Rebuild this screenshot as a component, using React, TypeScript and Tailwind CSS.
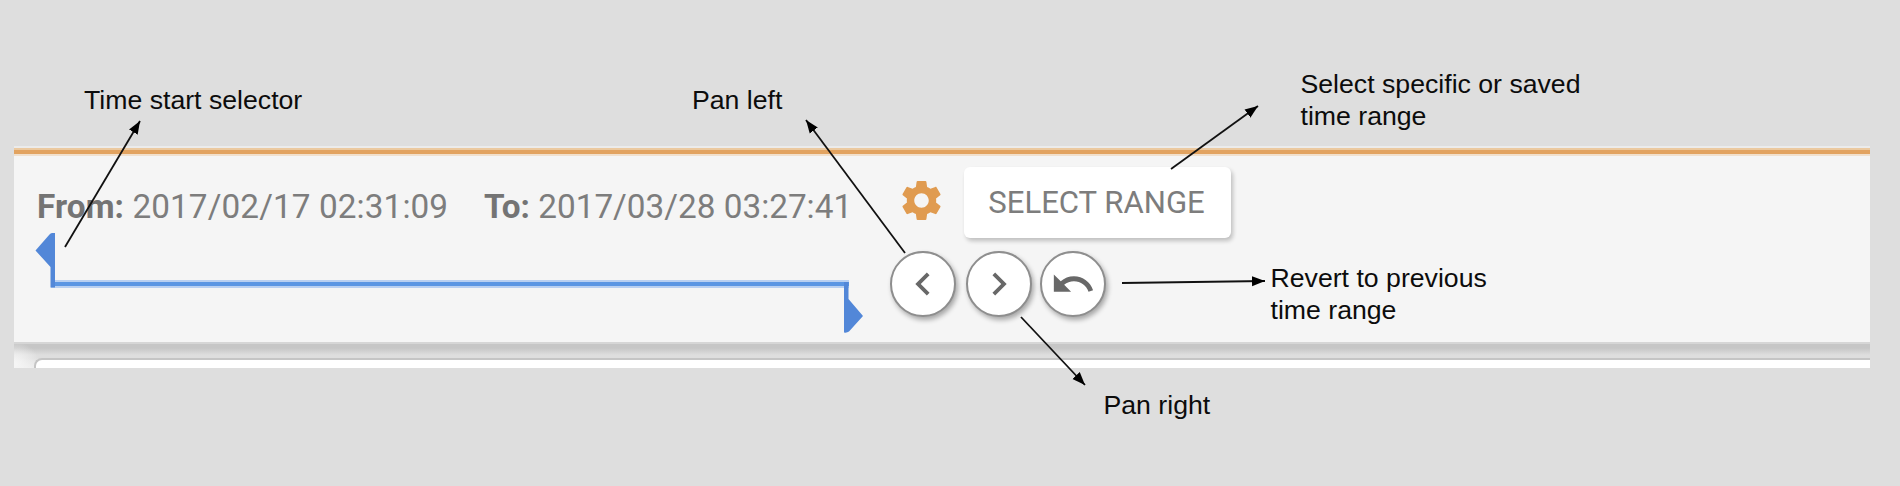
import React from "react";

const SETTINGS =
  "M19.43 12.98c.04-.32.07-.64.07-.98s-.03-.66-.07-.98l2.11-1.65c.19-.15.24-.42.12-.64l-2-3.46c-.12-.22-.39-.3-.61-.22l-2.49 1c-.52-.4-1.08-.73-1.69-.98l-.38-2.65C14.46 2.18 14.25 2 14 2h-4c-.25 0-.46.18-.49.42l-.38 2.65c-.61.25-1.17.59-1.69.98l-2.49-1c-.23-.09-.49 0-.61.22l-2 3.46c-.13.22-.07.49.12.64l2.11 1.65c-.04.32-.07.65-.07.98s.03.66.07.98l-2.11 1.65c-.19.15-.24.42-.12.64l2 3.46c.12.22.39.3.61.22l2.49-1c.52.4 1.08.73 1.69.98l.38 2.65c.03.24.24.42.49.42h4c.25 0 .46-.18.49-.42l.38-2.65c.61-.25 1.17-.59 1.69-.98l2.49 1c.23.09.49 0 .61-.22l2-3.46c.12-.22.07-.49-.12-.64l-2.11-1.65zM12 15.7c-2.04 0-3.7-1.66-3.7-3.7s1.66-3.7 3.7-3.7 3.7 1.66 3.7 3.7-1.66 3.7-3.7 3.7z";
const CHEVRON_LEFT = "M15.41 7.41L14 6l-6 6 6 6 1.41-1.41L10.83 12z";
const CHEVRON_RIGHT = "M10 6L8.59 7.41 13.17 12l-4.58 4.59L10 18l6-6z";
const UNDO =
  "M12.5 8c-2.65 0-5.05.99-6.9 2.6L2 7v9h9l-3.62-3.62c1.39-1.16 3.16-1.88 5.12-1.88 3.54 0 6.55 2.31 7.6 5.5l2.37-.78C21.08 11.03 17.15 8 12.5 8z";

function Icon({ d, className }: { d: string; className: string }) {
  return (
    <svg viewBox="0 0 24 24" fill="currentColor" className={className}>
      <path d={d} />
    </svg>
  );
}

function RoundButton({ d, label }: { d: string; label: string }) {
  return (
    <button
      aria-label={label}
      className="flex size-[66px] items-center justify-center rounded-full border-2 border-[#8e8e8e] bg-white text-[#686868] shadow-[2px_3px_5px_rgba(0,0,0,0.32)]"
    >
      <Icon d={d} className="size-[46px] shrink-0" />
    </button>
  );
}

function DateField({ name, value, className }: { name: string; value: string; className: string }) {
  return (
    <div className={className}>
      <span className="font-bold text-[#747474]">{name}</span> {value}
    </div>
  );
}

function RangeSlider() {
  return (
    <svg width="830" height="104" viewBox="0 0 830 104" className="mt-1 block">
      <rect x="17" y="50" width="798" height="8" fill="#b9d0f1" />
      <rect x="17" y="52" width="798" height="4" fill="#5b96e3" />
      <path d="M18 3H21V57.5H16.5V37L1.500 20.500L15.500 4.500Q16.500 3 18 3Z" fill="#5287d8" />
      <path d="M810 52H814.5V69L829 86L815 101.5Q813 103 810 102.500Z" fill="#5287d8" />
    </svg>
  );
}

const arrows: [number, number, number, number][] = [
  [65, 247, 140, 121],
  [905, 253, 806, 120],
  [1171, 169, 1258, 106],
  [1122, 283, 1265, 281],
  [1021, 317, 1085, 385],
];

function Arrows() {
  return (
    <svg viewBox="0 0 1900 486" className="pointer-events-none absolute inset-0 h-[486px] w-[1900px]">
      <defs>
        <marker id="head" markerUnits="userSpaceOnUse" markerWidth="14" markerHeight="11" refX="13" refY="5.500" orient="auto">
          <path d="M0 0.500L13 5.500L0 10.500Z" />
        </marker>
      </defs>
      {arrows.map(([x1, y1, x2, y2]) => (
        <line key={x1} x1={x1} y1={y1} x2={x2} y2={y2} stroke="#111" strokeWidth="1.8" markerEnd="url(#head)" />
      ))}
    </svg>
  );
}

const note =
  "absolute whitespace-nowrap font-['Liberation_Sans',Arial,sans-serif] text-[26.67px] leading-8 text-[#0c0c0c]";

export default function App() {
  return (
    <div className="relative h-[486px] w-[1900px] overflow-hidden bg-[#dedede] pt-[146px] pl-[14px] font-[Roboto,sans-serif]">
      <div className="h-[222px] w-[1856px] overflow-hidden">
        <header className="flex h-[198px] flex-col bg-[#f5f5f5]">
          <div className="h-0.5 bg-[#ebebeb]" />
          <div className="h-0.5 bg-[#ebc9a0]" />
          <div className="h-1 bg-[#e2a360]" />
          <div className="h-0.5 bg-[#f1e0cd]" />
          <div className="flex h-[186px]">
            <div className="w-[876px] pt-[31px]">
              <div className="flex h-10 pl-[23px] text-[33.3px] leading-10 whitespace-nowrap text-[#7d7d7d]">
                <DateField name="From:" value="2017/02/17 02:31:09" className="w-[447px] tracking-[0.1px]" />
                <DateField name="To:" value="2017/03/28 03:27:41" className="w-[370px]" />
              </div>
              <div className="-mt-px pl-5">
                <RangeSlider />
              </div>
            </div>
            <div className="pt-[11px]">
              <div className="flex h-[71px] items-center">
                <Icon d={SETTINGS} className="-mt-1 mr-[19px] ml-2 size-[47px] text-[#e09b50]" />
                <button className="h-[71px] w-[267px] rounded-[6px] bg-white pt-px pr-[2px] text-[31.1px] whitespace-nowrap text-[#7d7d7d] shadow-[2px_3px_4px_rgba(0,0,0,0.22)]">
                  SELECT RANGE
                </button>
              </div>
              <div className="mt-[13px] flex">
                <RoundButton d={CHEVRON_LEFT} label="Pan left" />
                <div className="ml-[10px]">
                  <RoundButton d={CHEVRON_RIGHT} label="Pan right" />
                </div>
                <div className="ml-2">
                  <RoundButton d={UNDO} label="Revert" />
                </div>
              </div>
            </div>
          </div>
          <div className="h-0.5 bg-[#d6d6d6]" />
        </header>
        <div className="h-6 bg-[radial-gradient(ellipse_26px_22px_at_0px_20px,#f5f5f5_10%,transparent),linear-gradient(to_bottom,#c6c6c6_4px,#dedede_11px,#dedede_14px,#ececec_24px)] pt-[14px] pl-5">
          <div className="h-[30px] rounded-tl-[8px] border-t-2 border-l-2 border-[#c5c5c5] bg-white" />
        </div>
      </div>

      <div className={`${note} top-[84px] left-[84px]`}>Time start selector</div>
      <div className={`${note} top-[84px] left-[692px]`}>Pan left</div>
      <div className={`${note} top-[68px] left-[1300.5px]`}>
        Select specific or saved
        <br />
        time range
      </div>
      <div className={`${note} top-[262px] left-[1270.5px]`}>
        Revert to previous
        <br />
        time range
      </div>
      <div className={`${note} top-[389px] left-[1103.5px]`}>Pan right</div>
      <Arrows />
    </div>
  );
}
